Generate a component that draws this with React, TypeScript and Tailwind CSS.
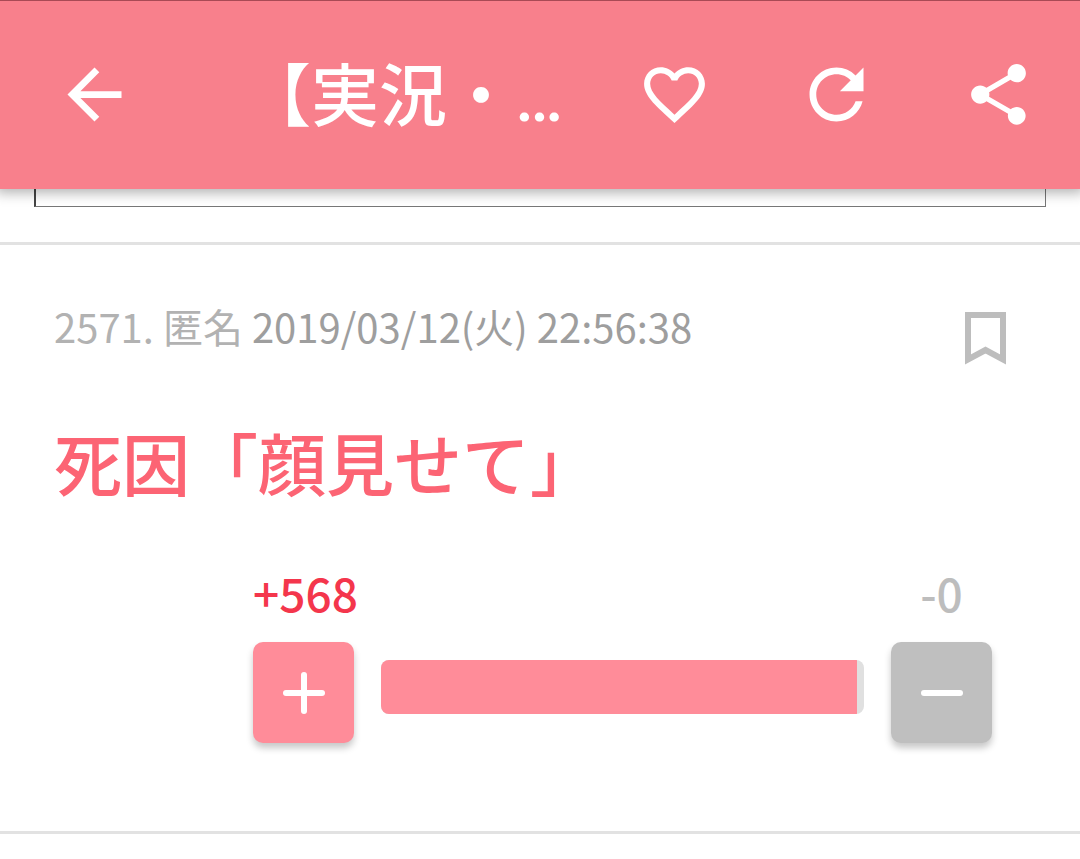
import { MdArrowBack, MdFavoriteBorder, MdRefresh, MdShare } from 'react-icons/md';

const comment = {
  id: 2571,
  name: '匿名',
  date: '2019/03/12(火) 22:56:38',
  body: '死因「顔見せて」',
  plus: 568,
  minus: 0,
  plusRate: 98.6,
};

const Header = () => (
  <header className="sticky top-0 z-10 flex h-[189px] items-center border-t border-[#a84a55] bg-[#f8808c] pb-[2px] text-white shadow-[0_0_12px_4px_rgba(0,0,0,0.3)]">
    <button type="button" aria-label="戻る" className="flex w-[189px] shrink-0 justify-center">
      <MdArrowBack className="size-[81px]" />
    </button>
    <h1 className="min-w-0 flex-1 whitespace-nowrap pl-[54px] pt-[2px] text-[68px] font-medium leading-[96px]">
      【実況・<span className="font-['Roboto']">…</span>
    </h1>
    <nav className="mr-px flex shrink-0">
      <button type="button" aria-label="お気に入り" className="flex w-[162px] items-center justify-center">
        <MdFavoriteBorder className="size-[73px]" />
      </button>
      <button type="button" aria-label="更新" className="flex w-[162px] items-center justify-center">
        <MdRefresh className="size-[81px]" />
      </button>
      <button type="button" aria-label="共有" className="flex w-[162px] items-center justify-center">
        <MdShare className="size-[73px]" />
      </button>
    </nav>
  </header>
);

const BookmarkIcon = () => (
  <svg viewBox="0 0 41 53" className="h-[53px] w-[41px]" fill="none" stroke="#bdbdbd" strokeWidth="6">
    <path d="M3 3H38V47.5L20.5 38L3 47.5Z" />
  </svg>
);

const VoteIcon = ({ plus = false }: { plus?: boolean }) => (
  <svg viewBox="0 0 44 44" className="size-11" stroke="#fff" strokeWidth="6" strokeLinecap="round">
    <path d="M4 22H40" />
    {plus && <path d="M22 4V40" />}
  </svg>
);

const Comment = ({ data }: { data: typeof comment }) => (
  <article className="border-y-[3px] border-[#e2e2e2] pl-[54px] pr-[74px] pb-[88px] pt-[57px]">
    <div className="flex items-start justify-between">
      <p className="text-[40px] leading-[48px] text-[#b2b2b2]">
        {data.id}. {data.name} <time className="text-[#9e9e9e]">{data.date}</time>
      </p>
      <button type="button" aria-label="ブックマーク" className="mt-[10px]">
        <BookmarkIcon />
      </button>
    </div>

    <p className="mt-[49px] text-[68px] font-medium leading-[96px] text-[#fc6474]">{data.body}</p>

    {/* Votes */}
    <div className="ml-[199px] mr-[14px] mt-[54px]">
      <div className="flex justify-between text-[46px] font-medium leading-[56px]">
        <span className="text-[#f4364c]">+{data.plus}</span>
        <span className="w-[101px] text-center text-[#bdbdbd]">-{data.minus}</span>
      </div>
      <div className="mt-[22px] flex items-center gap-[27px]">
        <button
          type="button"
          aria-label="プラス"
          className="flex size-[101px] shrink-0 items-center justify-center rounded-[10px] bg-[#ff8c99] shadow-[0_5px_7px_rgba(0,0,0,0.22)]"
        >
          <VoteIcon plus />
        </button>
        <div className="mb-[11px] h-[54px] flex-1 overflow-hidden rounded-lg bg-[#e0e0e0]">
          <div className="h-full bg-[#ff8c99]" style={{ width: `${data.plusRate}%` }} />
        </div>
        <button
          type="button"
          aria-label="マイナス"
          className="flex size-[101px] shrink-0 items-center justify-center rounded-[10px] bg-[#bfbfbf] shadow-[0_5px_7px_rgba(0,0,0,0.22)]"
        >
          <VoteIcon />
        </button>
      </div>
    </div>
  </article>
);

export default function App() {
  return (
    <div className="min-h-screen bg-white font-['Noto_Sans_CJK_JP',sans-serif]">
      <Header />
      <main>
        {/* Bottom edge of the frame scrolled under the header */}
        <div className="mx-[34px] mb-[35px] h-[18px] border-b border-l-2 border-r border-b-[#777] border-l-[#444] border-r-[#777]" />
        <Comment data={comment} />
      </main>
    </div>
  );
}
